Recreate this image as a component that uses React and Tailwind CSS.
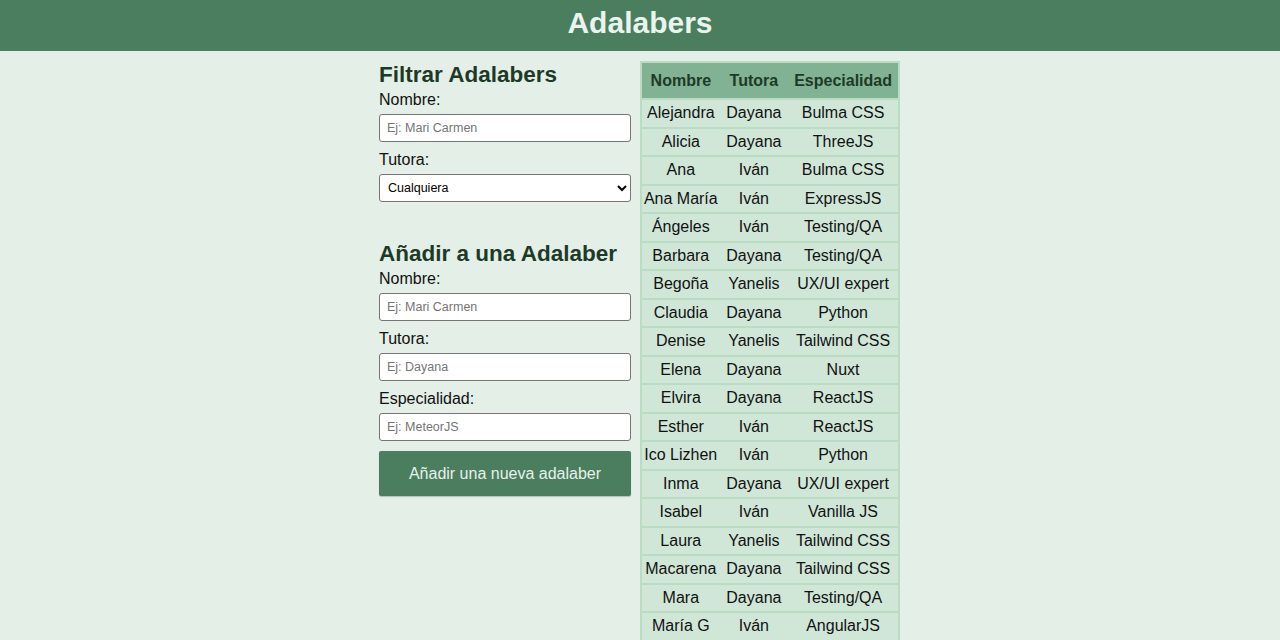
import React from 'react';

const adalabers = [
    ['Alejandra', 'Dayana', 'Bulma CSS'],
    ['Alicia', 'Dayana', 'ThreeJS'],
    ['Ana', 'Iván', 'Bulma CSS'],
    ['Ana María', 'Iván', 'ExpressJS'],
    ['Ángeles', 'Iván', 'Testing/QA'],
    ['Barbara', 'Dayana', 'Testing/QA'],
    ['Begoña', 'Yanelis', 'UX/UI expert'],
    ['Claudia', 'Dayana', 'Python'],
    ['Denise', 'Yanelis', 'Tailwind CSS'],
    ['Elena', 'Dayana', 'Nuxt'],
    ['Elvira', 'Dayana', 'ReactJS'],
    ['Esther', 'Iván', 'ReactJS'],
    ['Ico Lizhen', 'Iván', 'Python'],
    ['Inma', 'Dayana', 'UX/UI expert'],
    ['Isabel', 'Iván', 'Vanilla JS'],
    ['Laura', 'Yanelis', 'Tailwind CSS'],
    ['Macarena', 'Dayana', 'Tailwind CSS'],
    ['Mara', 'Dayana', 'Testing/QA'],
    ['María G', 'Iván', 'AngularJS'],
];

const labelCls = 'block text-[16px] leading-[18px] text-[#111]';
const inputCls = 'mt-[5px] block w-full h-[28px] px-[7px] bg-white border border-[#767676] rounded-[3px] text-[12.5px] text-black placeholder:text-[#757575] outline-none';

const App = () => {
    return (
        <div className="min-h-screen bg-[#e3efe7] font-['Liberation_Sans',Arial,sans-serif]">
            <header className="h-[51px] bg-[#4a7e5f] flex items-center justify-center pb-[5px]">
                <h1 className="text-[30px] font-bold text-[#eaf4ee] leading-none">Adalabers</h1>
            </header>

            <main className="w-[522px] mx-auto flex gap-[9px] pt-[10px]">
                <div className="w-[252px] shrink-0">
                    <form>
                        <h2 className="h-[26px] leading-[28px] text-[22.5px] font-bold text-[#1d3a27] mb-[4px]">Filtrar Adalabers</h2>
                        <label className={labelCls}>Nombre:</label>
                        <input className={inputCls} placeholder="Ej: Mari Carmen" />
                        <label className={labelCls + ' mt-[9px]'}>Tutora:</label>
                        <select className="mt-[5px] block w-full h-[28px] px-[4px] bg-white border border-[#767676] rounded-[3px] text-[12.5px] text-black outline-none">
                            <option>Cualquiera</option>
                            <option>Dayana</option>
                            <option>Iván</option>
                            <option>Yanelis</option>
                        </select>
                    </form>

                    <form className="mt-[38px]">
                        <h2 className="h-[26px] leading-[28px] text-[22.5px] font-bold text-[#1d3a27] mb-[4px]">Añadir a una Adalaber</h2>
                        <label className={labelCls}>Nombre:</label>
                        <input className={inputCls} placeholder="Ej: Mari Carmen" />
                        <label className={labelCls + ' mt-[9px]'}>Tutora:</label>
                        <input className={inputCls} placeholder="Ej: Dayana" />
                        <label className={labelCls + ' mt-[9px]'}>Especialidad:</label>
                        <input className={inputCls} placeholder="Ej: MeteorJS" />
                        <button type="button" className="mt-[10px] w-full h-[45px] bg-[#4a7e5f] text-[#e6f1ea] text-[16px] rounded-[2px] shadow-[0_1px_1px_rgba(0,0,0,0.2)]">
                            Añadir una nueva adalaber
                        </button>
                    </form>
                </div>

                <table className="w-[260px] shrink-0 border-2 border-[#b9dcc2] border-collapse self-start table-fixed">
                    <colgroup>
                        <col className="w-[78px]" />
                        <col className="w-[68px]" />
                        <col className="w-[110px]" />
                    </colgroup>
                    <thead>
                        <tr className="bg-[#80b293] border-b-2 border-[#b9dcc2]">
                            <th className="h-[37px] p-0 text-[16px] font-bold text-[#1d3a27] text-center">Nombre</th>
                            <th className="h-[37px] p-0 text-[16px] font-bold text-[#1d3a27] text-center">Tutora</th>
                            <th className="h-[37px] p-0 text-[16px] font-bold text-[#1d3a27] text-center">Especialidad</th>
                        </tr>
                    </thead>
                    <tbody>
                        {adalabers.map((row, index) => (
                            <tr key={index} className="bg-[#d0e7d8] border-b-2 border-[#b9dcc2]">
                                {row.map((val, i) => (
                                    <td key={i} className="h-[28.5px] p-0 text-[16px] text-[#111] text-center whitespace-nowrap">
                                        {val}
                                    </td>
                                ))}
                            </tr>
                        ))}
                    </tbody>
                </table>
            </main>
        </div>
    );
};

export default App;
